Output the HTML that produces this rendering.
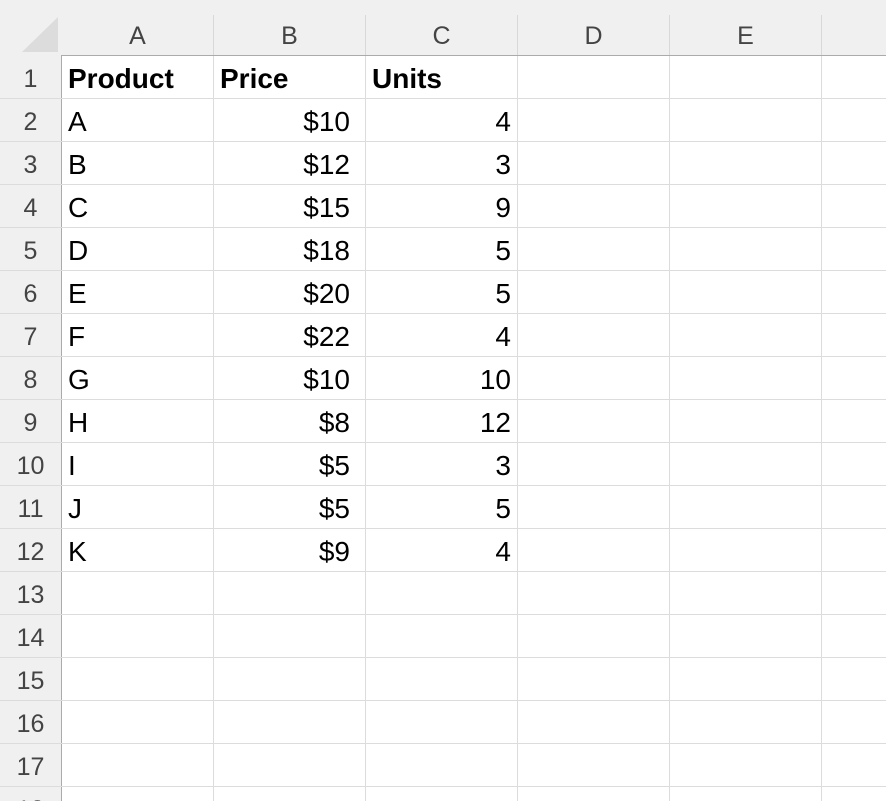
<!DOCTYPE html>
<html><head><meta charset="utf-8"><style>
html,body{margin:0;padding:0;background:#fff;width:886px;height:801px;overflow:hidden;}
body{position:relative;font-family:"Liberation Sans",sans-serif;}
.hdrtop{position:absolute;left:0;top:0;width:886px;height:55px;background:#f0f0f0;border-bottom:1px solid #ababab;}
.hdrleft{position:absolute;left:0;top:0;width:61px;height:801px;background:#f0f0f0;}
.lb{position:absolute;left:61px;top:55px;width:1px;height:746px;background:#ababab;}
.vl{position:absolute;width:1px;background:#dcdcdc;}
.hl{position:absolute;height:1px;background:#dcdcdc;}
.ch{position:absolute;top:18px;height:37px;line-height:37px;text-align:center;font-size:25px;color:#444;}
.rh{position:absolute;left:0;width:61px;text-align:center;font-size:25px;color:#444;height:43px;line-height:48px;}
.c{position:absolute;height:43px;line-height:47px;font-size:28px;color:#000;}
.l{text-align:left;padding-left:6px;}
.r{text-align:right;box-sizing:border-box;width:152px;}
.pb{padding-right:16px;}
.pc{padding-right:7px;}
b{font-weight:bold;}
</style></head><body>
<div class="hdrtop"></div>
<div class="hdrleft"></div>
<div class="lb"></div>
<svg style="position:absolute;left:22px;top:17px" width="38" height="36"><polygon points="36,0 36,35 0,35" fill="#dcdcdc"/></svg>
<div class="vl" style="left:213px;top:15px;height:40px;background:#d8d8d8"></div>
<div class="vl" style="left:365px;top:15px;height:40px;background:#d8d8d8"></div>
<div class="vl" style="left:517px;top:15px;height:40px;background:#d8d8d8"></div>
<div class="vl" style="left:669px;top:15px;height:40px;background:#d8d8d8"></div>
<div class="vl" style="left:821px;top:15px;height:40px;background:#d8d8d8"></div>
<div class="vl" style="left:213px;top:56px;height:745px"></div>
<div class="vl" style="left:365px;top:56px;height:745px"></div>
<div class="vl" style="left:517px;top:56px;height:745px"></div>
<div class="vl" style="left:669px;top:56px;height:745px"></div>
<div class="vl" style="left:821px;top:56px;height:745px"></div>
<div class="ch" style="left:62px;width:151px">A</div>
<div class="ch" style="left:214px;width:151px">B</div>
<div class="ch" style="left:366px;width:151px">C</div>
<div class="ch" style="left:518px;width:151px">D</div>
<div class="ch" style="left:670px;width:151px">E</div>
<div class="hl" style="left:0;top:98px;width:886px"></div>
<div class="hl" style="left:0;top:141px;width:886px"></div>
<div class="hl" style="left:0;top:184px;width:886px"></div>
<div class="hl" style="left:0;top:227px;width:886px"></div>
<div class="hl" style="left:0;top:270px;width:886px"></div>
<div class="hl" style="left:0;top:313px;width:886px"></div>
<div class="hl" style="left:0;top:356px;width:886px"></div>
<div class="hl" style="left:0;top:399px;width:886px"></div>
<div class="hl" style="left:0;top:442px;width:886px"></div>
<div class="hl" style="left:0;top:485px;width:886px"></div>
<div class="hl" style="left:0;top:528px;width:886px"></div>
<div class="hl" style="left:0;top:571px;width:886px"></div>
<div class="hl" style="left:0;top:614px;width:886px"></div>
<div class="hl" style="left:0;top:657px;width:886px"></div>
<div class="hl" style="left:0;top:700px;width:886px"></div>
<div class="hl" style="left:0;top:743px;width:886px"></div>
<div class="hl" style="left:0;top:786px;width:886px"></div>
<div class="rh" style="top:55px">1</div>
<div class="rh" style="top:98px">2</div>
<div class="rh" style="top:141px">3</div>
<div class="rh" style="top:184px">4</div>
<div class="rh" style="top:227px">5</div>
<div class="rh" style="top:270px">6</div>
<div class="rh" style="top:313px">7</div>
<div class="rh" style="top:356px">8</div>
<div class="rh" style="top:399px">9</div>
<div class="rh" style="top:442px">10</div>
<div class="rh" style="top:485px">11</div>
<div class="rh" style="top:528px">12</div>
<div class="rh" style="top:571px">13</div>
<div class="rh" style="top:614px">14</div>
<div class="rh" style="top:657px">15</div>
<div class="rh" style="top:700px">16</div>
<div class="rh" style="top:743px">17</div>
<div class="rh" style="top:786px">18</div>
<div class="c l" style="left:62px;top:55px"><b>Product</b></div>
<div class="c l" style="left:214px;top:55px"><b>Price</b></div>
<div class="c l" style="left:366px;top:55px"><b>Units</b></div>
<div class="c l" style="left:62px;top:98px">A</div><div class="c r pb" style="left:214px;top:98px">$10</div><div class="c r pc" style="left:366px;top:98px">4</div>
<div class="c l" style="left:62px;top:141px">B</div><div class="c r pb" style="left:214px;top:141px">$12</div><div class="c r pc" style="left:366px;top:141px">3</div>
<div class="c l" style="left:62px;top:184px">C</div><div class="c r pb" style="left:214px;top:184px">$15</div><div class="c r pc" style="left:366px;top:184px">9</div>
<div class="c l" style="left:62px;top:227px">D</div><div class="c r pb" style="left:214px;top:227px">$18</div><div class="c r pc" style="left:366px;top:227px">5</div>
<div class="c l" style="left:62px;top:270px">E</div><div class="c r pb" style="left:214px;top:270px">$20</div><div class="c r pc" style="left:366px;top:270px">5</div>
<div class="c l" style="left:62px;top:313px">F</div><div class="c r pb" style="left:214px;top:313px">$22</div><div class="c r pc" style="left:366px;top:313px">4</div>
<div class="c l" style="left:62px;top:356px">G</div><div class="c r pb" style="left:214px;top:356px">$10</div><div class="c r pc" style="left:366px;top:356px">10</div>
<div class="c l" style="left:62px;top:399px">H</div><div class="c r pb" style="left:214px;top:399px">$8</div><div class="c r pc" style="left:366px;top:399px">12</div>
<div class="c l" style="left:62px;top:442px">I</div><div class="c r pb" style="left:214px;top:442px">$5</div><div class="c r pc" style="left:366px;top:442px">3</div>
<div class="c l" style="left:62px;top:485px">J</div><div class="c r pb" style="left:214px;top:485px">$5</div><div class="c r pc" style="left:366px;top:485px">5</div>
<div class="c l" style="left:62px;top:528px">K</div><div class="c r pb" style="left:214px;top:528px">$9</div><div class="c r pc" style="left:366px;top:528px">4</div>
</body></html>
